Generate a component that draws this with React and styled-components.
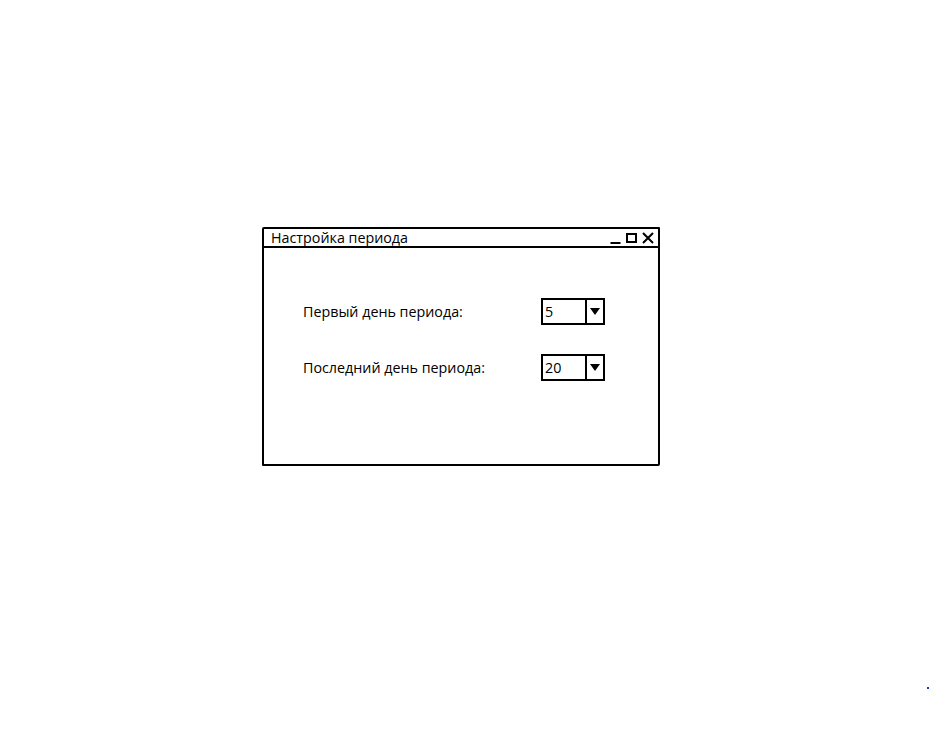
import React from "react";
import styled, { createGlobalStyle } from "styled-components";

const Global = createGlobalStyle`
  body {
    margin: 0;
    background: #fff;
    font-family: "Open Sans", "Noto Sans", sans-serif;
    color: #000;
  }
`;

const Page = styled.div`
  position: relative;
  width: 930px;
  height: 756px;
  padding: 227px 0 0 262px;
  box-sizing: border-box;
`;

const Window = styled.div`
  width: 398px;
  height: 239px;
  box-sizing: border-box;
  border: 2px solid #000;
  border-radius: 2px 1px 2px 1px;
  display: flex;
  flex-direction: column;
`;

const TitleBar = styled.div`
  height: 19px;
  box-sizing: border-box;
  border-bottom: 2px solid #000;
  display: flex;
  align-items: center;
  justify-content: space-between;
  padding: 0 4px 0 7px;
`;

const Title = styled.span`
  font-size: 14.3px;
  line-height: 16px;
`;

const Controls = styled.div`
  display: flex;
  align-items: center;
  gap: 5px;
`;

const Body = styled.div`
  padding: 50px 0 0 39px;
  display: grid;
  grid-template-columns: 238px 64px;
  row-gap: 29px;
  align-items: center;
`;

const Label = styled.span`
  font-size: 14.3px;
`;

const Combo = styled.div`
  width: 64px;
  height: 27px;
  box-sizing: border-box;
  border: 2px solid #000;
  display: grid;
  grid-template-columns: 44px 1fr;
`;

const ComboValue = styled.span`
  font-size: 14.3px;
  line-height: 23px;
  padding-left: 2px;
  border-right: 2px solid #000;
`;

const ComboArrow = styled.div`
  display: flex;
  align-items: center;
  justify-content: center;
`;

const Dot = styled.div`
  position: absolute;
  left: 927px;
  top: 687px;
  width: 2px;
  height: 2px;
  background: #2233cc;
`;

const Arrow = () => (
  <svg width="10" height="7" viewBox="0 0 10 7">
    <path d="M0 0 H10 L5 7 Z" fill="#000" />
  </svg>
);

const WinIcons = () => (
  <Controls>
    <svg width="11" height="12" viewBox="0 0 11 12">
      <path d="M0.5 11 H10.5" stroke="#000" strokeWidth="2" />
    </svg>
    <svg width="11" height="12" viewBox="0 0 11 12">
      <rect x="1" y="2" width="9" height="8" fill="none" stroke="#000" strokeWidth="2" />
    </svg>
    <svg width="12" height="12" viewBox="0 0 12 12">
      <path d="M1 1 L11 11 M11 1 L1 11" stroke="#000" strokeWidth="2" />
    </svg>
  </Controls>
);

const rows = [
  { label: "Первый день периода:", value: "5" },
  { label: "Последний день периода:", value: "20" },
];

export default function App() {
  return (
    <>
      <Global />
      <Page>
        <Window>
          <TitleBar>
            <Title>Настройка периода</Title>
            <WinIcons />
          </TitleBar>
          <Body>
            {rows.map((r) => (
              <React.Fragment key={r.label}>
                <Label>{r.label}</Label>
                <Combo>
                  <ComboValue>{r.value}</ComboValue>
                  <ComboArrow>
                    <Arrow />
                  </ComboArrow>
                </Combo>
              </React.Fragment>
            ))}
          </Body>
        </Window>
        <Dot />
      </Page>
    </>
  );
}
